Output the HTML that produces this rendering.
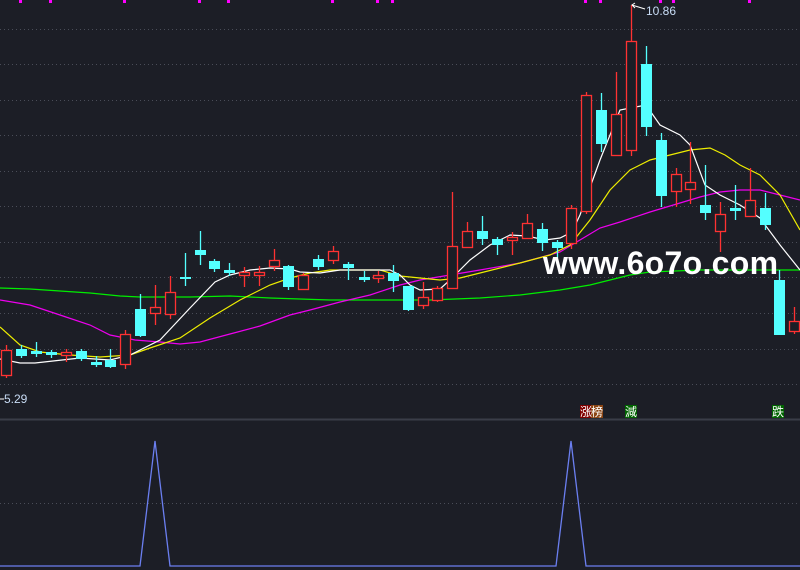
<!DOCTYPE html>
<html><head><meta charset="utf-8"><style>
html,body{margin:0;padding:0;background:#1c1e26;width:800px;height:570px;overflow:hidden}
svg{display:block}
</style></head><body>
<svg width="800" height="570" xmlns="http://www.w3.org/2000/svg">
<rect width="800" height="570" fill="#1c1e26"/>
<g stroke="#4a4d58" stroke-width="1" stroke-dasharray="1 3">
<line x1="0" y1="29.5" x2="800" y2="29.5"/><line x1="0" y1="64.5" x2="800" y2="64.5"/>
<line x1="0" y1="100.5" x2="800" y2="100.5"/><line x1="0" y1="135.5" x2="800" y2="135.5"/>
<line x1="0" y1="171.5" x2="800" y2="171.5"/><line x1="0" y1="206.5" x2="800" y2="206.5"/>
<line x1="0" y1="242.5" x2="800" y2="242.5"/><line x1="0" y1="277.5" x2="800" y2="277.5"/>
<line x1="0" y1="313.5" x2="800" y2="313.5"/><line x1="0" y1="349.5" x2="800" y2="349.5"/>
<line x1="0" y1="384.5" x2="800" y2="384.5"/><line x1="0" y1="503.5" x2="800" y2="503.5"/>
</g>
<line x1="0" y1="419.5" x2="800" y2="419.5" stroke="#3a3d48" stroke-width="2"/>
<g fill="#ff00ff">
<rect x="19" y="0" width="3" height="3"/><rect x="49" y="0" width="3" height="3"/><rect x="123" y="0" width="3" height="3"/><rect x="198" y="0" width="3" height="3"/><rect x="227" y="0" width="3" height="3"/><rect x="331" y="0" width="3" height="3"/><rect x="376" y="0" width="3" height="3"/><rect x="391" y="0" width="3" height="3"/><rect x="584" y="0" width="3" height="3"/><rect x="599" y="0" width="3" height="3"/><rect x="659" y="0" width="3" height="3"/><rect x="672" y="0" width="3" height="3"/><rect x="748" y="0" width="3" height="3"/>
</g>
<g fill="none" stroke-width="1.2">
<polyline stroke="#00ee00" points="0,288 30,289 60,291 90,293 120,296 140,297 190,297 230,296 270,298 300,299 330,300 360,300 400,300 430,300 480,298 520,295 560,290 590,285 610,280 630,275 650,272 700,270 800,270"/>
<polyline stroke="#ee00ee" points="0,300 30,305 60,315 90,325 110,335 135,340 160,342 180,344 200,342 230,334 260,326 290,315 310,310 340,302 370,295 400,285 420,280 450,275 480,270 520,263 560,252 580,240 600,228 620,222 650,212 680,203 700,197 720,192 740,190 760,190 780,195 800,200"/>
<polyline stroke="#eeee00" points="0,327 20,345 40,352 70,355 100,357 130,355 150,348 180,338 210,318 240,300 270,285 290,278 310,273 330,270 360,270 380,270 400,276 420,278 440,280 460,278 480,273 520,263 550,255 570,245 590,220 610,190 630,170 650,160 670,155 690,150 710,148 725,155 740,165 760,175 780,195 800,230"/>
<polyline stroke="#ffffff" points="0,359 20,363 35,363 80,358 110,360 130,355 160,340 190,308 215,282 230,275 250,270 270,268 290,269 300,272 320,273 340,270 370,270 390,270 400,275 410,285 420,290 440,289 450,280 470,260 490,245 510,235 527,236 545,240 560,238 572,232 580,215 600,160 620,110 646,105 660,125 680,135 690,145 705,185 720,195 740,205 760,218 780,245 800,270"/>
</g>
<g id="c" stroke-width="1.3"></g>
<text x="543" y="274" font-family="Liberation Sans, sans-serif" font-weight="bold" font-size="32" fill="#ffffff" letter-spacing="0.3">www.6o7o.com</text>
<polyline points="632,5 645,9" stroke="#ffffff" fill="none"/>
<polyline points="635,3 632,5 635,8" stroke="#ffffff" fill="none"/>
<text x="646" y="15" font-family="Liberation Sans, sans-serif" font-size="12" fill="#c8dcf5">10.86</text>
<line x1="0" y1="399" x2="4" y2="399" stroke="#fff"/>
<text x="4" y="403" font-family="Liberation Sans, sans-serif" font-size="12" fill="#c8dcf5">5.29</text>
<rect x="580" y="405" width="11" height="13" fill="#800000"/><rect x="591" y="405" width="12" height="13" fill="#8b4513"/>
<rect x="625" y="405" width="12" height="13" fill="#006400"/><rect x="772" y="405" width="12" height="13" fill="#006400"/>
<g font-family="Liberation Sans, 'Noto Sans CJK SC', sans-serif" font-size="12" fill="#ffffff">
<text x="580" y="416">涨</text><text x="591" y="416">榜</text><text x="625" y="416">減</text><text x="772" y="416">跌</text></g>
<polyline fill="none" stroke="#6b7ff0" stroke-width="1.3" points="0,566 140,566 155,441 170,566 556,566 571,441 586,566 800,566"/>
</svg>
<script>
var d=[[6,'r',350,375,345,378],[21,'c',349,356,345,358],[36,'c',351,354,342,357],[51,'c',352,355,350,358],[66,'r',352,355,349,362],[81,'c',351,359,349,361],[96,'c',362,365,356,367],[110,'c',360,367,349,368],[125,'r',334,364,330,369],[140,'c',309,336,294,337],[155,'r',307,313,285,325],[170,'r',292,314,276,319],[185,'c',277,279,253,286],[200,'c',250,255,231,265],[214,'c',261,269,259,272],[229,'c',270,273,263,276],[244,'r',272,275,267,287],[259,'r',272,275,266,286],[274,'r',260,266,249,271],[288,'c',266,287,265,290],[303,'r',275,289,273,290],[318,'c',259,267,255,270],[333,'r',251,260,246,264],[348,'c',264,268,262,280],[364,'c',277,280,271,282],[378,'r',275,278,271,283],[393,'c',273,281,265,292],[408,'c',286,310,286,311],[423,'r',297,305,282,309],[437,'r',288,300,286,302],[452,'r',246,288,192,288],[467,'r',231,247,222,247],[482,'c',231,239,216,245],[497,'c',239,245,237,255],[512,'r',237,240,232,255],[527,'r',223,238,214,238],[542,'c',229,243,223,251],[557,'c',242,248,240,258],[571,'r',208,243,205,249],[586,'r',95,211,92,214],[601,'c',110,144,93,152],[616,'r',114,155,72,155],[631,'r',41,150,5,156],[646,'c',64,127,46,136],[661,'c',140,196,133,207],[676,'r',174,191,168,207],[690,'r',182,189,142,204],[705,'c',205,213,165,220],[720,'r',214,231,202,252],[735,'c',208,211,185,220],[750,'r',200,216,168,216],[765,'c',208,225,193,230],[779,'c',280,335,270,335],[794,'r',321,331,307,334]];
var g=document.getElementById('c'),s='';
d.forEach(function(k){var x=k[0],col=k[1]=='r'?'#ff3232':'#54ffff';
s+='<line x1="'+(x+.5)+'" y1="'+k[4]+'" x2="'+(x+.5)+'" y2="'+k[5]+'" stroke="'+col+'"/>';
if(k[1]=='r')s+='<rect x="'+(x-4.5)+'" y="'+(k[2]+.5)+'" width="10" height="'+Math.max(1,k[3]-k[2])+'" fill="#1c1e26" stroke="'+col+'"/>';
else s+='<rect x="'+(x-5)+'" y="'+k[2]+'" width="11" height="'+Math.max(2,k[3]-k[2])+'" fill="'+col+'"/>';});
g.innerHTML=s;
</script>
</body></html>
